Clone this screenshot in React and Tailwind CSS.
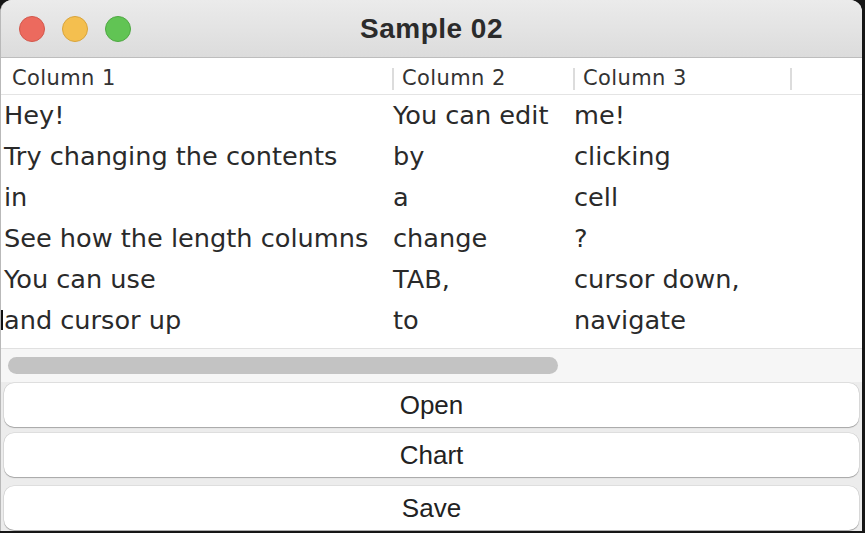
import React from 'react'

const rows = [
  ['Hey!', 'You can edit', 'me!'],
  ['Try changing the contents', 'by', 'clicking'],
  ['in', 'a', 'cell'],
  ['See how the length columns', 'change', '?'],
  ['You can use', 'TAB,', 'cursor down,'],
  ['and cursor up', 'to', 'navigate'],
]

const cellFont = { fontFamily: '"DejaVu Sans", Verdana, sans-serif' }

function Button({ label, className = '' }) {
  return (
    <button className={`h-[44px] w-full rounded-[10px] bg-white text-[26px] text-[#222] shadow-[0_1px_1px_rgba(0,0,0,0.25),0_0_0_0.5px_rgba(0,0,0,0.12)] font-['Liberation_Sans',Arial,sans-serif] ${className}`}>
      {label}
    </button>
  )
}

export default function App() {
  return (
    <div className="w-[865px] h-[533px] bg-[#161616] overflow-hidden">
      <div className="w-[862px] h-[531px] rounded-t-[12px] overflow-hidden flex flex-col bg-[#ececec] border-l border-[#b9b9b9]">
        <div className="h-[58px] shrink-0 grid grid-cols-[1fr_auto_1fr] items-center bg-gradient-to-b from-[#ebebeb] to-[#dcdcdc] border-b border-[#bdbdbd]">
          <div className="flex items-center gap-[17px] pl-[18px]">
            <span className="w-[26px] h-[26px] rounded-full bg-[#ec6a5e] border border-[#d3574b]" />
            <span className="w-[26px] h-[26px] rounded-full bg-[#f4bf4f] border border-[#d9a43a]" />
            <span className="w-[26px] h-[26px] rounded-full bg-[#61c454] border border-[#4ea842]" />
          </div>
          <div className="text-[28px] font-bold text-[#2b2b2b] font-['Liberation_Sans',Arial,sans-serif] tracking-[0.5px]">
            Sample 02
          </div>
          <div />
        </div>

        <div className="bg-white shrink-0 h-[291px] border-b border-[#e0e0e0]" style={cellFont}>
          <div className="flex h-[37px] pt-[5px] items-center border-b border-[#e4e4e4] text-[21px] tracking-[0.4px] text-[#333]">
            <div className="w-[391px] pl-[11px]">Column 1</div>
            <div className="w-[181px] flex items-center">
              <span className="w-[2px] h-[22px] bg-[#dcdcdc]" />
              <span className="pl-[8px]">Column 2</span>
            </div>
            <div className="w-[217px] flex items-center">
              <span className="w-[2px] h-[22px] bg-[#dcdcdc]" />
              <span className="pl-[8px]">Column 3</span>
            </div>
            <span className="w-[2px] h-[22px] bg-[#dcdcdc]" />
          </div>
          {rows.map((r, i) => (
            <div key={i} className="flex h-[41px] items-center text-[25.6px] text-[#2a2a2a] relative">
              {i === 5 && <span className="absolute left-0 top-[10px] w-[2px] h-[20px] bg-[#111]" />}
              <div className="w-[391px] pl-[3px] whitespace-nowrap">{r[0]}</div>
              <div className="w-[181px] pl-[1px] whitespace-nowrap">{r[1]}</div>
              <div className="w-[217px] pl-[1px] whitespace-nowrap">{r[2]}</div>
            </div>
          ))}
        </div>

        <div className="h-[33px] shrink-0 bg-[#f6f6f6] flex items-center px-[7px]">
          <div className="w-[550px] h-[17px] rounded-full bg-[#c3c3c3]" />
        </div>

        <div className="flex flex-col gap-[6px] px-[3px] pt-[1px]">
          <Button label="Open" />
          <Button label="Chart" />
          <Button label="Save" className="mt-[3px]" />
        </div>
      </div>
    </div>
  )
}
